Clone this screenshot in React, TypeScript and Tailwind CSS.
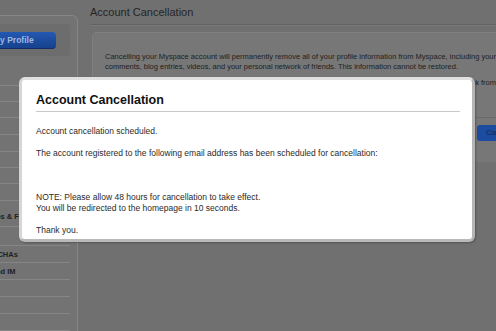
export default function App() {
  const items = [
    'h-[16px]',
    'h-[16px]',
    'h-[17px]',
    'h-[17px]',
    'h-[16px]',
    'h-[17px]',
    'h-[17px]',
  ];
  return (
    <div className="relative w-[496px] h-[331px] overflow-hidden bg-[#707070] flex font-['Liberation_Sans',Arial,sans-serif]">
      {/* Sidebar */}
      <div className="w-[78px] shrink-0 mt-[15px] bg-[#737373] border-t border-r border-[#858585] rounded-tr-[6px] overflow-hidden flex flex-col">
        <div className="mt-[8px] h-[32px] w-[70px] bg-[#6d6d6d] rounded-r-[4px] pt-[8px]">
          <div className="h-[17px] w-[56px] rounded-r-[4px] bg-gradient-to-b from-[#2459b2] to-[#16418e] border-b border-[#123066] flex items-center overflow-hidden">
            <span className="ml-[-7px] whitespace-nowrap text-[8.5px] font-bold text-[#9db6df]">My Profile</span>
          </div>
        </div>
        <div className="w-[70px] h-[30px] border-b border-[#858585]" />
        {items.map((h, i) => (
          <div key={i} className={`w-[70px] ${h} border-b border-[#858585]`} />
        ))}
        <div className="w-[70px] h-[26px] border-b border-[#858585] flex items-end pb-[4px] overflow-hidden">
          <span className="ml-[-22px] whitespace-nowrap text-[7.5px] font-bold text-[#1f1f1f] leading-[10px]">Groups &amp; Forums</span>
        </div>
        <div className="w-[70px] h-[19px] border-b border-[#858585]" />
        <div className="w-[70px] h-[17px] border-b border-[#858585] flex items-center overflow-hidden">
          <span className="ml-[-23px] whitespace-nowrap text-[7.5px] font-bold text-[#1f1f1f]">CAPTCHAs</span>
        </div>
        <div className="w-[70px] h-[17px] border-b border-[#858585] flex items-center overflow-hidden">
          <span className="ml-[-34px] whitespace-nowrap text-[7.5px] font-bold text-[#1f1f1f]">Mobile and IM</span>
        </div>
        <div className="w-[70px] h-[17px] border-b border-[#858585]" />
        <div className="w-[70px] h-[17px] border-b border-[#858585]" />
        <div className="w-[70px] h-[17px] border-b border-[#858585]" />
      </div>

      {/* Main */}
      <div className="flex-1 pl-[12px] flex flex-col min-w-0">
        <div className="h-[25px] border-b border-[#626262] flex items-center pb-[1px]">
          <h1 className="text-[11px] leading-[14px] text-[#262626] whitespace-nowrap">Account Cancellation</h1>
        </div>
        <div className="h-px bg-[#7a7a7a]" />
        <div className="mt-[6px] ml-[2px] h-[130px] bg-[#777777] border-t border-l border-[#7f7f7f] rounded-tl-[5px] flex flex-col overflow-hidden">
          <div className="pl-[12px] pt-[19px] text-[7.5px] leading-[10px] text-[#1e1e1e] whitespace-nowrap">
            <p>Cancelling your Myspace account will permanently remove all of your profile information from Myspace, including your photos,</p>
            <p>comments, blog entries, videos, and your personal network of friends. This information cannot be restored.</p>
            <p className="mt-[6px]">If you are sure that you want to permanently remove your entire Myspace profile and all of your personal network from Myspace, click Cancel Account below.</p>
          </div>
          <div className="mt-[29px] border-t border-[#6a6a6a] flex-1 flex justify-end pt-[7px]">
            <div className="h-[16px] w-[40px] mr-[-21px] rounded-[3px] bg-[#1b4c9f] text-[8px] leading-[16px] text-[#0e2855] pl-[9px] whitespace-nowrap overflow-hidden">Cancel Account</div>
          </div>
        </div>
      </div>

      {/* Modal */}
      <div className="absolute left-[19px] top-[77px] w-[456px] h-[165px] rounded-[6px] border-[3px] border-t-[#e0e0e0] border-l-[#d6d6d6] border-r-[#b5b5b5] border-b-[#b9b9b9] bg-white shadow-[1px_1px_2px_rgba(0,0,0,0.25)]">
        <div className="pl-[14px] pr-[12px]">
          <div className="pt-[13px] pb-[3px] border-b border-[#c9c9c9]">
            <h2 className="text-[12.5px] leading-[15px] font-bold text-[#111111]">Account Cancellation</h2>
          </div>
          <div className="mt-[14px] text-[8.5px] leading-[11px] text-[#2a2a2a]">
            <p>Account cancellation scheduled.</p>
            <p className="mt-[11px]">The account registered to the following email address has been scheduled for cancellation:</p>
            <p className="mt-[11px]">&nbsp;</p>
            <p className="mt-[11px]">NOTE: Please allow 48 hours for cancellation to take effect.</p>
            <p>You will be redirected to the homepage in 10 seconds.</p>
            <p className="mt-[11px]">Thank you.</p>
          </div>
        </div>
      </div>
    </div>
  );
}
